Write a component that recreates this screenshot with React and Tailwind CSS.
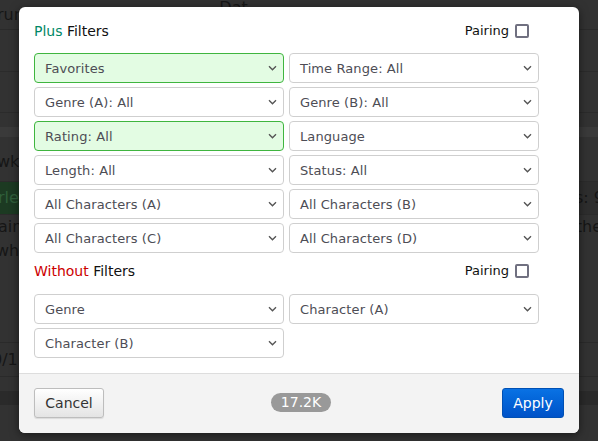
import { useState } from "react";

const plusFilters = [
  { label: "Favorites", active: true },
  { label: "Time Range: All" },
  { label: "Genre (A): All" },
  { label: "Genre (B): All" },
  { label: "Rating: All", active: true },
  { label: "Language" },
  { label: "Length: All" },
  { label: "Status: All" },
  { label: "All Characters (A)" },
  { label: "All Characters (B)" },
  { label: "All Characters (C)" },
  { label: "All Characters (D)" },
];

const withoutFilters = [{ label: "Genre" }, { label: "Character (A)" }, { label: "Character (B)" }];

function Chevron() {
  return (
    <svg className="w-[9px] h-[6px] shrink-0" viewBox="0 0 9 6" fill="none">
      <path d="M1 1.2l3.5 3.5L8 1.2" stroke="#555" strokeWidth="1.4" />
    </svg>
  );
}

function FilterSelect({ label, active }) {
  return (
    <div
      className={
        active
          ? "h-[30px] flex items-center justify-between pl-[10px] pr-[6px] rounded-[4px] border border-[#3fb53f] bg-[#e3fce3] text-[13px] text-[#4d4d55]"
          : "h-[30px] flex items-center justify-between pl-[10px] pr-[6px] rounded-[4px] border border-[#cfcfcf] bg-white text-[13px] text-[#4d4d55]"
      }
    >
      <span className="pt-px tracking-[0.1px]">{label}</span>
      <Chevron />
    </div>
  );
}

function SectionTitle({ word, color, mt }) {
  const [checked, setChecked] = useState(false);
  return (
    <div className={`flex items-center justify-between h-5 pr-[10px] ${mt}`}>
      <div className="text-[14px] text-[#111]">
        <span style={{ color }}>{word}</span> Filters
      </div>
      <label className="flex items-center gap-[6px] text-[13px] text-[#111]">
        Pairing
        <span
          onClick={() => setChecked(!checked)}
          className="w-[14px] h-[14px] rounded-[2px] border-2 border-[#707080] bg-white"
        />
      </label>
    </div>
  );
}

function Backdrop() {
  return (
    <div className="absolute inset-0 flex flex-col bg-[#323232] text-[#161616] text-[16px] overflow-hidden">
      <div className="h-[30px] flex items-center border-b border-[#2a2a2a]">
        <span className="-ml-[3px]">rum</span>
        <span className="ml-[190px] -mt-[14px]">Dat</span>
      </div>
      <div className="h-[42px] border-b border-[#2b2b2b]" />
      <div className="h-[41px] border-b border-[#2b2b2b]" />
      <div className="h-[14px]" />
      <div className="h-[10px] bg-[#3a3a3a]" />
      <div className="h-[45px] flex items-center border-b border-[#2b2b2b]">
        <span className="-ml-[3px] mt-[6px]">wke</span>
      </div>
      <div className="h-[33px] flex items-center justify-between bg-[#2e2e2e] border-b border-[#2b2b2b]">
        <span className="h-full flex items-center bg-[#1c3a22] text-[#2f5f3a] px-1 -ml-[6px]">rley</span>
        <span className="mr-[-6px]">s: 9</span>
      </div>
      <div className="h-[24px] flex items-end justify-between">
        <span className="-ml-[2px]">ain</span>
        <span className="mr-[-4px]">the</span>
      </div>
      <div className="h-[24px] flex items-end">
        <span className="-ml-[4px]">wha</span>
      </div>
      <div className="h-[80px] border-b border-[#2a2a2a]" />
      <div className="h-[34px] flex items-center border-b border-[#2a2a2a]">
        <span className="-ml-[8px]">0/1</span>
      </div>
      <div className="h-[14px]" />
      <div className="h-[14px] bg-[#2a2a2a]" />
    </div>
  );
}

export default function App() {
  return (
    <div
      className="relative w-[598px] h-[441px] overflow-hidden"
      style={{ fontFamily: '"DejaVu Sans", Verdana, sans-serif' }}
    >
      <Backdrop />
      <div className="absolute left-[19px] top-[7px] w-[560px] h-[426px] bg-white rounded-[6px] overflow-hidden flex flex-col shadow-[0_2px_10px_rgba(0,0,0,0.5)]">
        <div className="flex-1 pl-[15px] pr-[40px] pt-[14px]">
          <SectionTitle word="Plus" color="#008866" mt="" />
          <div className="grid grid-cols-2 gap-x-[5px] gap-y-[4px] mt-[12px]">
            {plusFilters.map((f) => (
              <FilterSelect key={f.label} {...f} />
            ))}
          </div>
          <SectionTitle word="Without" color="#cc0000" mt="mt-[8px]" />
          <div className="grid grid-cols-2 gap-x-[5px] gap-y-[4px] mt-[13px]">
            {withoutFilters.map((f) => (
              <FilterSelect key={f.label} {...f} />
            ))}
          </div>
        </div>
        <div className="h-[60px] shrink-0 border-t border-[#dddddd] bg-[#f3f3f3] flex items-start justify-between px-[15px] pt-[14px]">
          <button className="h-[30px] w-[70px] rounded-[3px] border border-[#bdbdbd] bg-gradient-to-b from-white to-[#e4e4e4] text-[14px] text-[#333] shadow-[0_1px_1px_rgba(0,0,0,0.1)]">
            Cancel
          </button>
          <span className="mt-[5px] mr-[4px] h-[19px] w-[60px] rounded-full bg-[#999999] text-white text-[14px] leading-[19px] text-center">
            17.2K
          </span>
          <button className="h-[30px] w-[62px] rounded-[3px] border border-[#0050b4] bg-gradient-to-b from-[#0a72e4] to-[#0052c8] text-[14px] text-white">
            Apply
          </button>
        </div>
      </div>
    </div>
  );
}
